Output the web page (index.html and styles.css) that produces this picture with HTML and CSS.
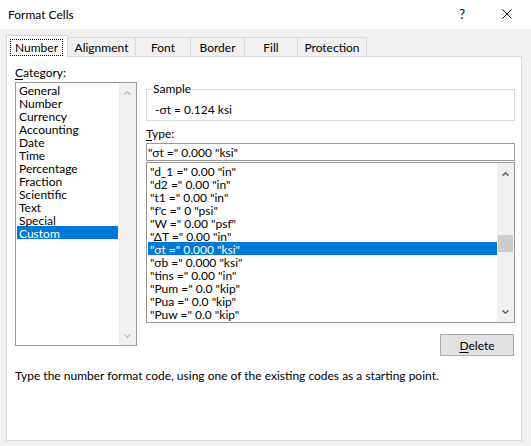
FILE: index.html
```html
<html>
	<head>
		<title>Format Cells</title>
		<link rel="stylesheet" href="styles.css">
	</head>
	<body>
		<div class="titlebar">
			<span class="title">Format Cells</span>
			<span class="help">?</span>
			<svg class="close" width="10" height="10" viewBox="0 0 10 10"><path d="M0.5 0.5L9.5 9.5M9.5 0.5L0.5 9.5" stroke="#000" stroke-width="1" fill="none"/></svg>
		</div>
		<div class="tabs">
			<div class="tab selected"><span class="focus">Number</span></div>
			<div class="tab" style="width:68px">Alignment</div>
			<div class="tab" style="width:55px">Font</div>
			<div class="tab" style="width:54px">Border</div>
			<div class="tab" style="width:53px">Fill</div>
			<div class="tab" style="width:69px">Protection</div>
		</div>
		<div class="panel">
			<div class="columns">
				<div class="cat-col">
					<div class="label"><u>C</u>ategory:</div>
					<div class="listbox cat-list">
						<div class="items">
							<div class="item">General</div>
							<div class="item">Number</div>
							<div class="item">Currency</div>
							<div class="item">Accounting</div>
							<div class="item">Date</div>
							<div class="item">Time</div>
							<div class="item">Percentage</div>
							<div class="item">Fraction</div>
							<div class="item">Scientific</div>
							<div class="item">Text</div>
							<div class="item">Special</div>
							<div class="item active">Custom</div>
						</div>
						<div class="scrollbar disabled">
							<svg class="arrow" width="7" height="4" viewBox="0 0 7 4"><path d="M0.5 3.6L3.5 0.8L6.5 3.6" fill="none" stroke-width="1.4"/></svg>
							<svg class="arrow down" width="7" height="4" viewBox="0 0 7 4"><path d="M0.5 0.4L3.5 3.2L6.5 0.4" fill="none" stroke-width="1.4"/></svg>
						</div>
					</div>
				</div>
				<div class="main-col">
					<fieldset class="sample">
						<legend>Sample</legend>
						<div class="sample-value">-σt = 0.124 ksi</div>
					</fieldset>
					<div class="label type-label"><u>T</u>ype:</div>
					<div class="textbox">"σt =" 0.000 "ksi"</div>
					<div class="listbox type-list">
						<div class="items">
							<div class="item">"d_1 =" 0.00 "in"</div>
							<div class="item">"d2 =" 0.00 "in"</div>
							<div class="item">"t1 =" 0.00 "in"</div>
							<div class="item">"f'c =" 0 "psi"</div>
							<div class="item">"W =" 0.00 "psf"</div>
							<div class="item">"ΔT =" 0.00 "in"</div>
							<div class="item active">"σt =" 0.000 "ksi"</div>
							<div class="item">"σb =" 0.000 "ksi"</div>
							<div class="item">"tins =" 0.00 "in"</div>
							<div class="item">"Pum =" 0.0 "kip"</div>
							<div class="item">"Pua =" 0.0 "kip"</div>
							<div class="item">"Puw =" 0.0 "kip"</div>
						</div>
						<div class="scrollbar">
							<svg class="arrow" width="7" height="4" viewBox="0 0 7 4"><path d="M0.5 3.6L3.5 0.8L6.5 3.6" fill="none" stroke-width="1.4"/></svg>
							<div class="thumb"></div>
							<svg class="arrow down" width="7" height="4" viewBox="0 0 7 4"><path d="M0.5 0.4L3.5 3.2L6.5 0.4" fill="none" stroke-width="1.4"/></svg>
						</div>
					</div>
					<button class="btn"><u>D</u>elete</button>
				</div>
			</div>
			<p class="hint">Type the number format code, using one of the existing codes as a starting point.</p>
		</div>
	</body>
</html>
```

FILE: styles.css
```css
body {
	margin: 0;
	width: 531px;
	height: 446px;
	background-color: #f0f0f0;
	font-family: "Segoe UI", Lato, "Noto Sans", sans-serif;
	font-size: 12px;
	color: #000;
	overflow: hidden;
}
u {
	text-decoration-thickness: 1px;
	text-underline-offset: 2px;
}
.titlebar {
	display: flex;
	align-items: center;
	height: 29px;
	padding: 0 19px 1px 8px;
	box-sizing: border-box;
	background-color: #fff;
}
.title {
	flex: 1;
}
.help {
	font-size: 13px;
	margin-right: 37px;
}
.tabs {
	display: flex;
	align-items: flex-end;
	padding: 6px 0 0 6px;
}
.tab {
	height: 19px;
	line-height: 20px;
	box-sizing: border-box;
	border-top: 1px solid #d9d9d9;
	border-right: 1px solid #d9d9d9;
	text-align: center;
}
.tab.selected {
	position: relative;
	z-index: 1;
	height: 22px;
	margin-bottom: -1px;
	border-left: 1px solid #d9d9d9;
	background-color: #fff;
}
.focus {
	display: block;
	width: 53px;
	margin: 3px 4px 0 3px;
	line-height: 15px;
	box-sizing: border-box;
	border: 1px dotted #000;
}
.panel {
	margin-left: 6px;
	width: 516px;
	height: 385px;
	box-sizing: border-box;
	border: 1px solid #d9d9d9;
	background-color: #fff;
	padding: 9px 0 0 8px;
}
.columns {
	display: flex;
	gap: 9px;
	align-items: flex-start;
}
.label {
	line-height: 14px;
	margin-bottom: 2px;
}
.listbox {
	display: flex;
	box-sizing: border-box;
	border: 1px solid #999;
	background-color: #fff;
}
.cat-list {
	width: 122px;
	height: 264px;
}
.items {
	flex: 1;
	padding: 0 1px;
}
.item {
	height: 13px;
	line-height: 15px;
	padding-left: 2px;
	white-space: nowrap;
}
.item.active {
	background-color: #0078d7;
	color: #fff;
}
.scrollbar {
	display: flex;
	flex-direction: column;
	align-items: center;
	width: 17px;
	background-color: #f0f0f0;
	padding: 8px 0 7px;
	box-sizing: border-box;
}
.arrow {
	stroke: #606060;
}
.disabled .arrow {
	stroke: #c0c0c0;
}
.arrow.down {
	margin-top: auto;
}
.main-col {
	display: flex;
	flex-direction: column;
	width: 369px;
	padding-top: 16px;
}
.sample {
	margin: 0;
	padding: 0 0 3px;
	border: 1px solid #dcdcdc;
	min-width: 0;
}
.sample legend {
	margin-left: 5px;
	padding: 0 1px;
	line-height: 14px;
}
.sample-value {
	padding: 6px 0 0 8px;
	line-height: 15px;
}
.type-label {
	margin-top: 6px;
}
.textbox {
	height: 18px;
	box-sizing: border-box;
	border: 1px solid #999;
	padding-left: 1px;
	line-height: 17px;
}
.type-list {
	margin-top: 1px;
	height: 161px;
}
.type-list .items {
	padding: 1px 0 0 1px;
}
.type-list .scrollbar {
	padding: 9px 0 8px;
}
.thumb {
	width: 15px;
	height: 17px;
	margin-top: 59px;
	background-color: #cdcdcd;
}
.btn {
	align-self: flex-end;
	width: 74px;
	height: 22px;
	margin: 11px 1px 0 0;
	border: 1px solid #adadad;
	background-color: #e1e1e1;
	font-family: inherit;
	font-size: 12px;
	color: #000;
	padding: 0;
}
.hint {
	margin: 13px 0 0;
	line-height: 14px;
}
```
